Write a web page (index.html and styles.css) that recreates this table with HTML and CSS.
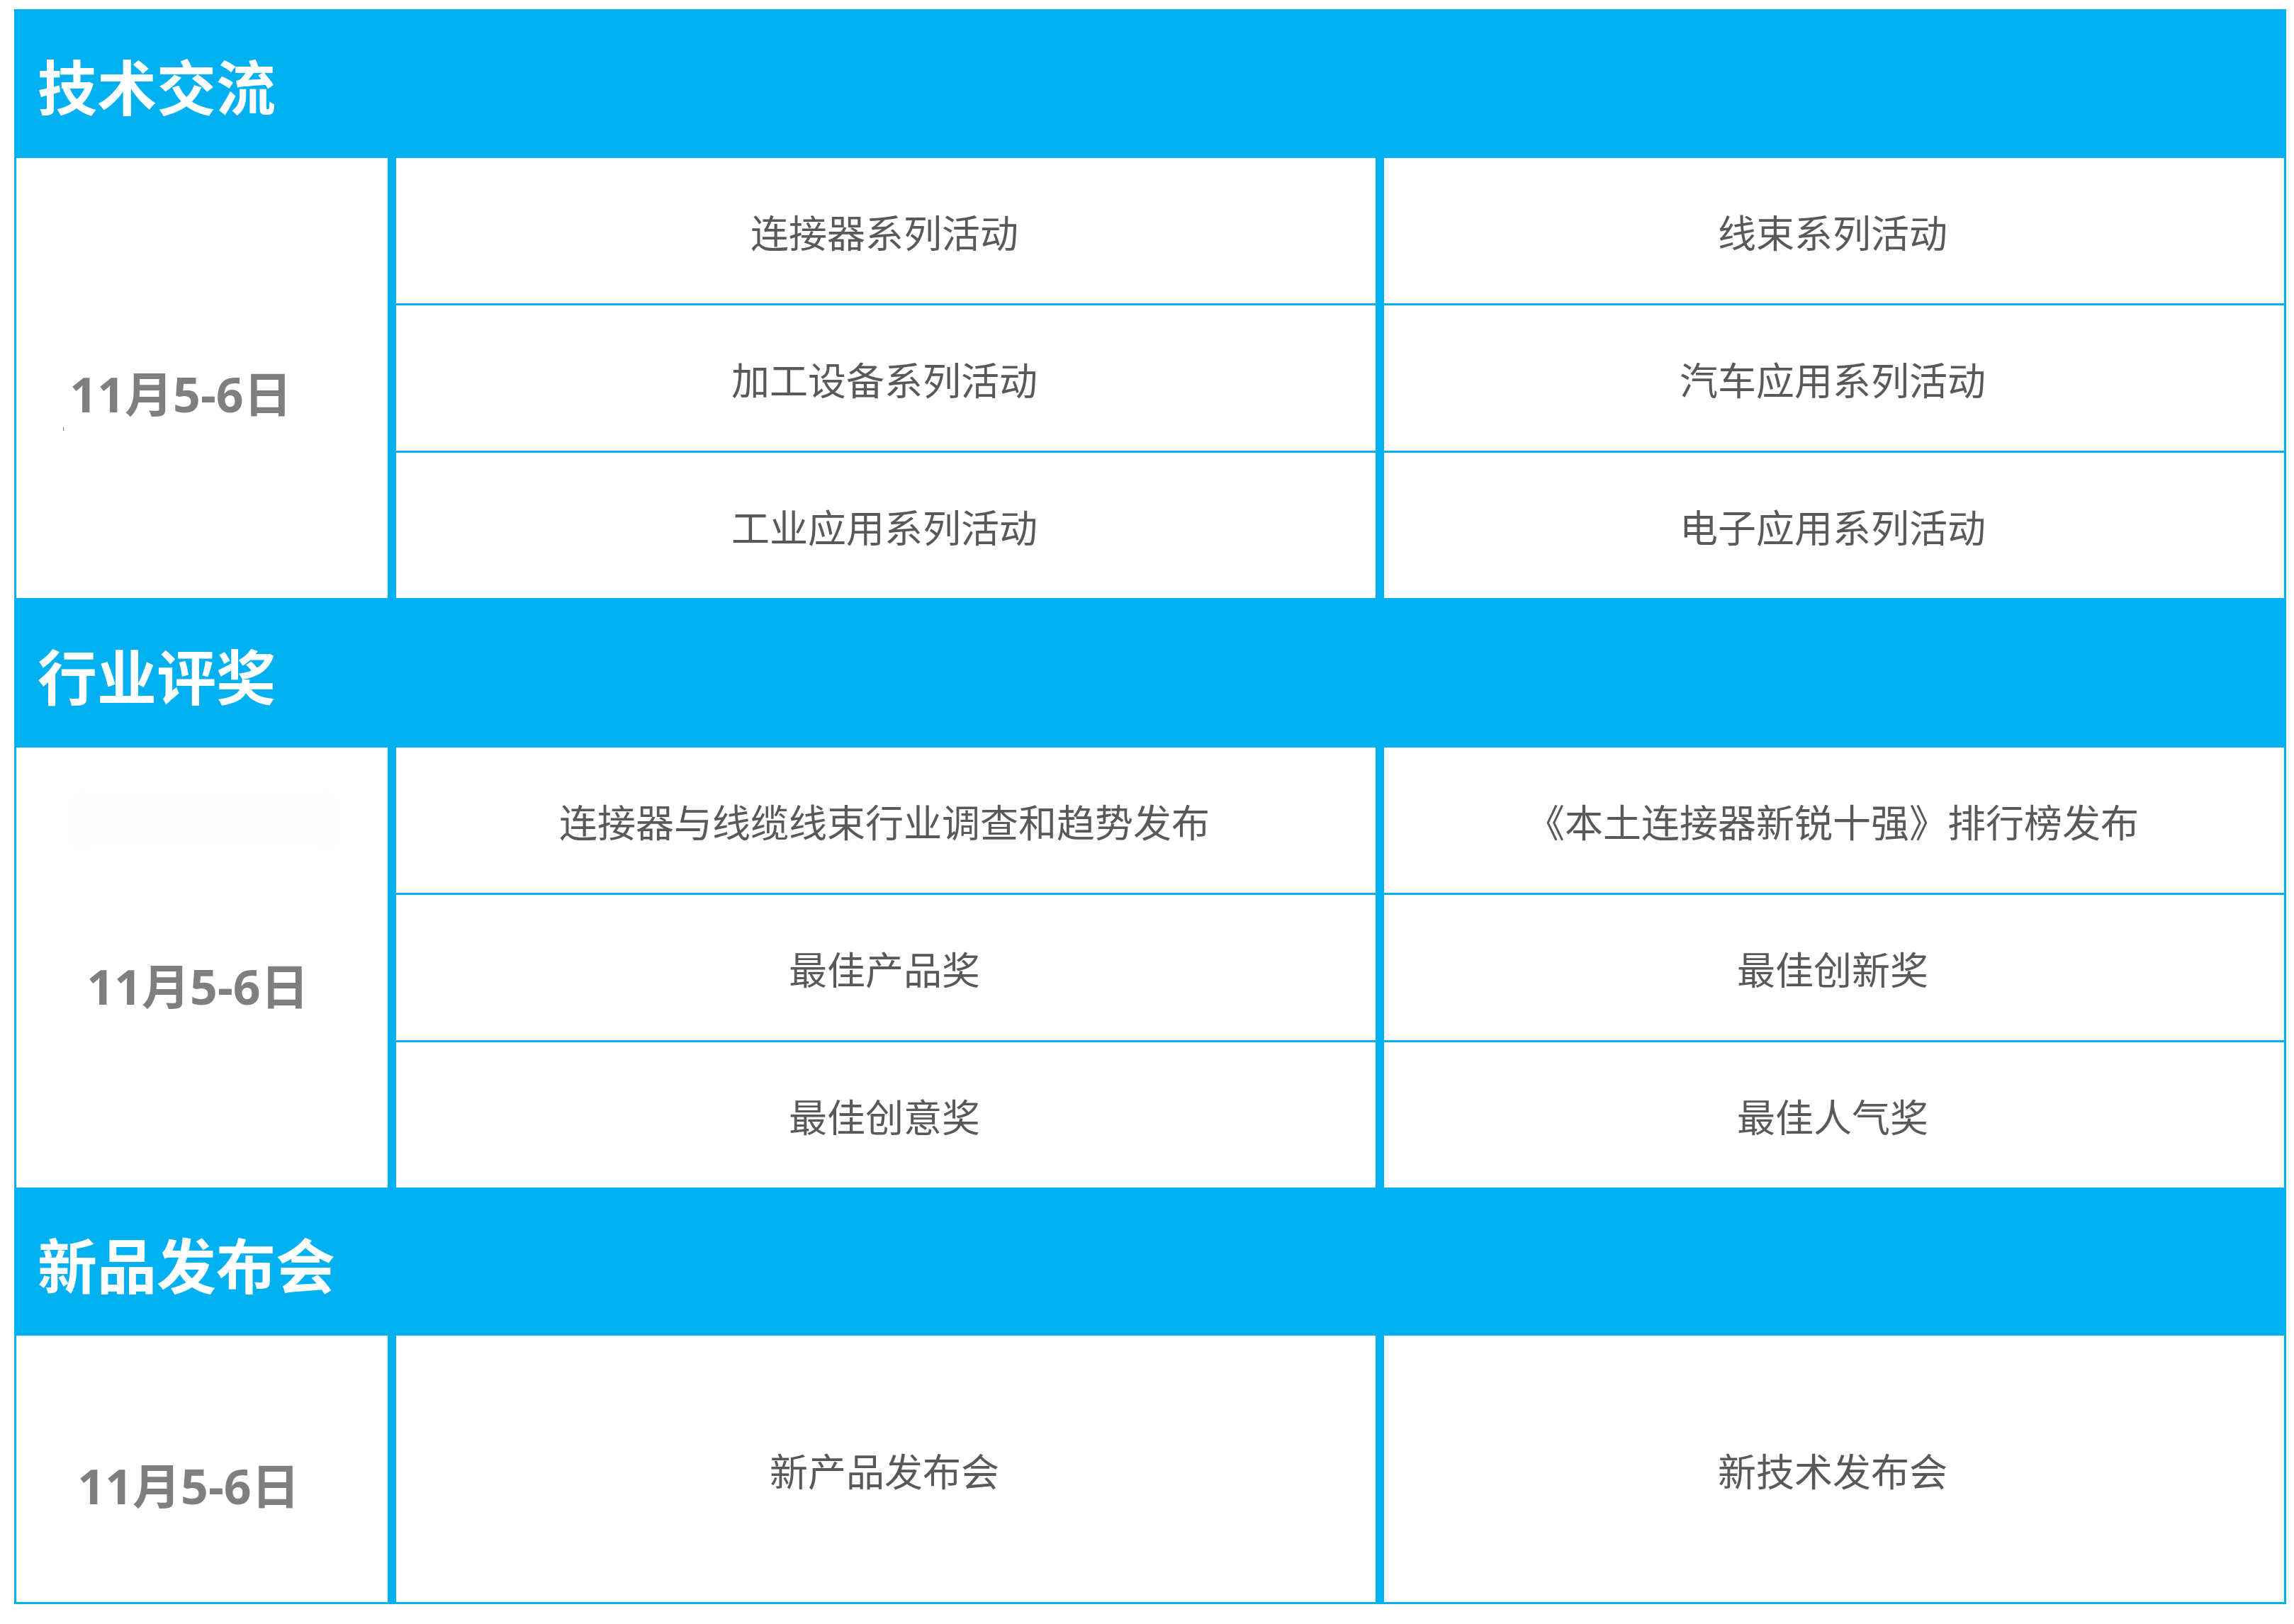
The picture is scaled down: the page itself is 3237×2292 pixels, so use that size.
FILE: index.html
```html
<!DOCTYPE html>
<html lang="zh-CN">
<head>
<meta charset="utf-8">
<title>活动日程</title>
<link rel="stylesheet" href="styles.css">
</head>
<body>
<div class="board">
  <section class="block">
    <h2 class="block-title">技术交流</h2>
    <div class="block-body">
      <div class="date date--one">11月5-6日<span class="speck"></span></div>
      <div class="cell">连接器系列活动</div>
      <div class="cell">线束系列活动</div>
      <div class="cell">加工设备系列活动</div>
      <div class="cell">汽车应用系列活动</div>
      <div class="cell">工业应用系列活动</div>
      <div class="cell">电子应用系列活动</div>
    </div>
  </section>
  <section class="block">
    <h2 class="block-title block-title--mid">行业评奖</h2>
    <div class="block-body">
      <div class="date date--two">11月5-6日<span class="ghost"></span></div>
      <div class="cell">连接器与线缆线束行业调查和趋势发布</div>
      <div class="cell">《本土连接器新锐十强》排行榜发布</div>
      <div class="cell">最佳产品奖</div>
      <div class="cell">最佳创新奖</div>
      <div class="cell">最佳创意奖</div>
      <div class="cell">最佳人气奖</div>
    </div>
  </section>
  <section class="block">
    <h2 class="block-title block-title--last">新品发布会</h2>
    <div class="block-body block-body--last">
      <div class="date date--three">11月5-6日</div>
      <div class="cell">新产品发布会</div>
      <div class="cell">新技术发布会</div>
    </div>
  </section>
</div>
</body>
</html>
```

FILE: styles.css
```css
html, body {
  margin: 0;
  padding: 0;
  background: #ffffff;
}

.board {
  margin: 13px 0 0 20px;
  width: 3206px;
  font-family: "Noto Sans CJK SC", "Noto Sans", sans-serif;
}

.block-title {
  margin: 0;
  height: 210px;
  box-sizing: border-box;
  background: #00b0f0;
  color: #ffffff;
  font-size: 84px;
  font-weight: 700;
  line-height: 1;
  display: flex;
  align-items: center;
  padding: 4px 0 0 33px;
}

.block-title--mid {
  height: 211px;
}

.block-title--last {
  height: 209px;
}

.block-body {
  display: grid;
  grid-template-columns: 524px 1382px 1270px;
  grid-auto-rows: 205px;
  column-gap: 12px;
  row-gap: 3px;
  background: #00b0f0;
  border-left: 3px solid #00b0f0;
  border-right: 3px solid #00b0f0;
}

.block-body--last {
  grid-auto-rows: 376px;
  border-bottom: 3px solid #00b0f0;
}

.cell {
  background: #ffffff;
  display: flex;
  align-items: center;
  justify-content: center;
  color: #595959;
  font-size: 54px;
  font-weight: 400;
  padding: 2px 4px 0 0;
  box-sizing: border-box;
}

.date {
  position: relative;
  grid-row: span 3;
  background: #ffffff;
  display: flex;
  align-items: center;
  justify-content: center;
  box-sizing: border-box;
  color: #7f7f7f;
  font-family: "Open Sans", "Noto Sans CJK SC", sans-serif;
  font-weight: 700;
  font-size: 68px;
  padding-top: 38px;
}

.block-body--last .date {
  grid-row: span 1;
}

.date--one {
  padding-right: 60px;
}

.date--two {
  padding-right: 12px;
  padding-top: 46px;
}

.date--three {
  padding-right: 38px;
  padding-top: 40px;
}

.ghost {
  position: absolute;
  left: 80px;
  top: 72px;
  width: 370px;
  height: 60px;
  background: #f8f8f8;
  filter: blur(10px);
  opacity: 0.5;
}

.speck {
  position: absolute;
  left: 66px;
  top: 380px;
  width: 1px;
  height: 5px;
  background: #777777;
}
```
